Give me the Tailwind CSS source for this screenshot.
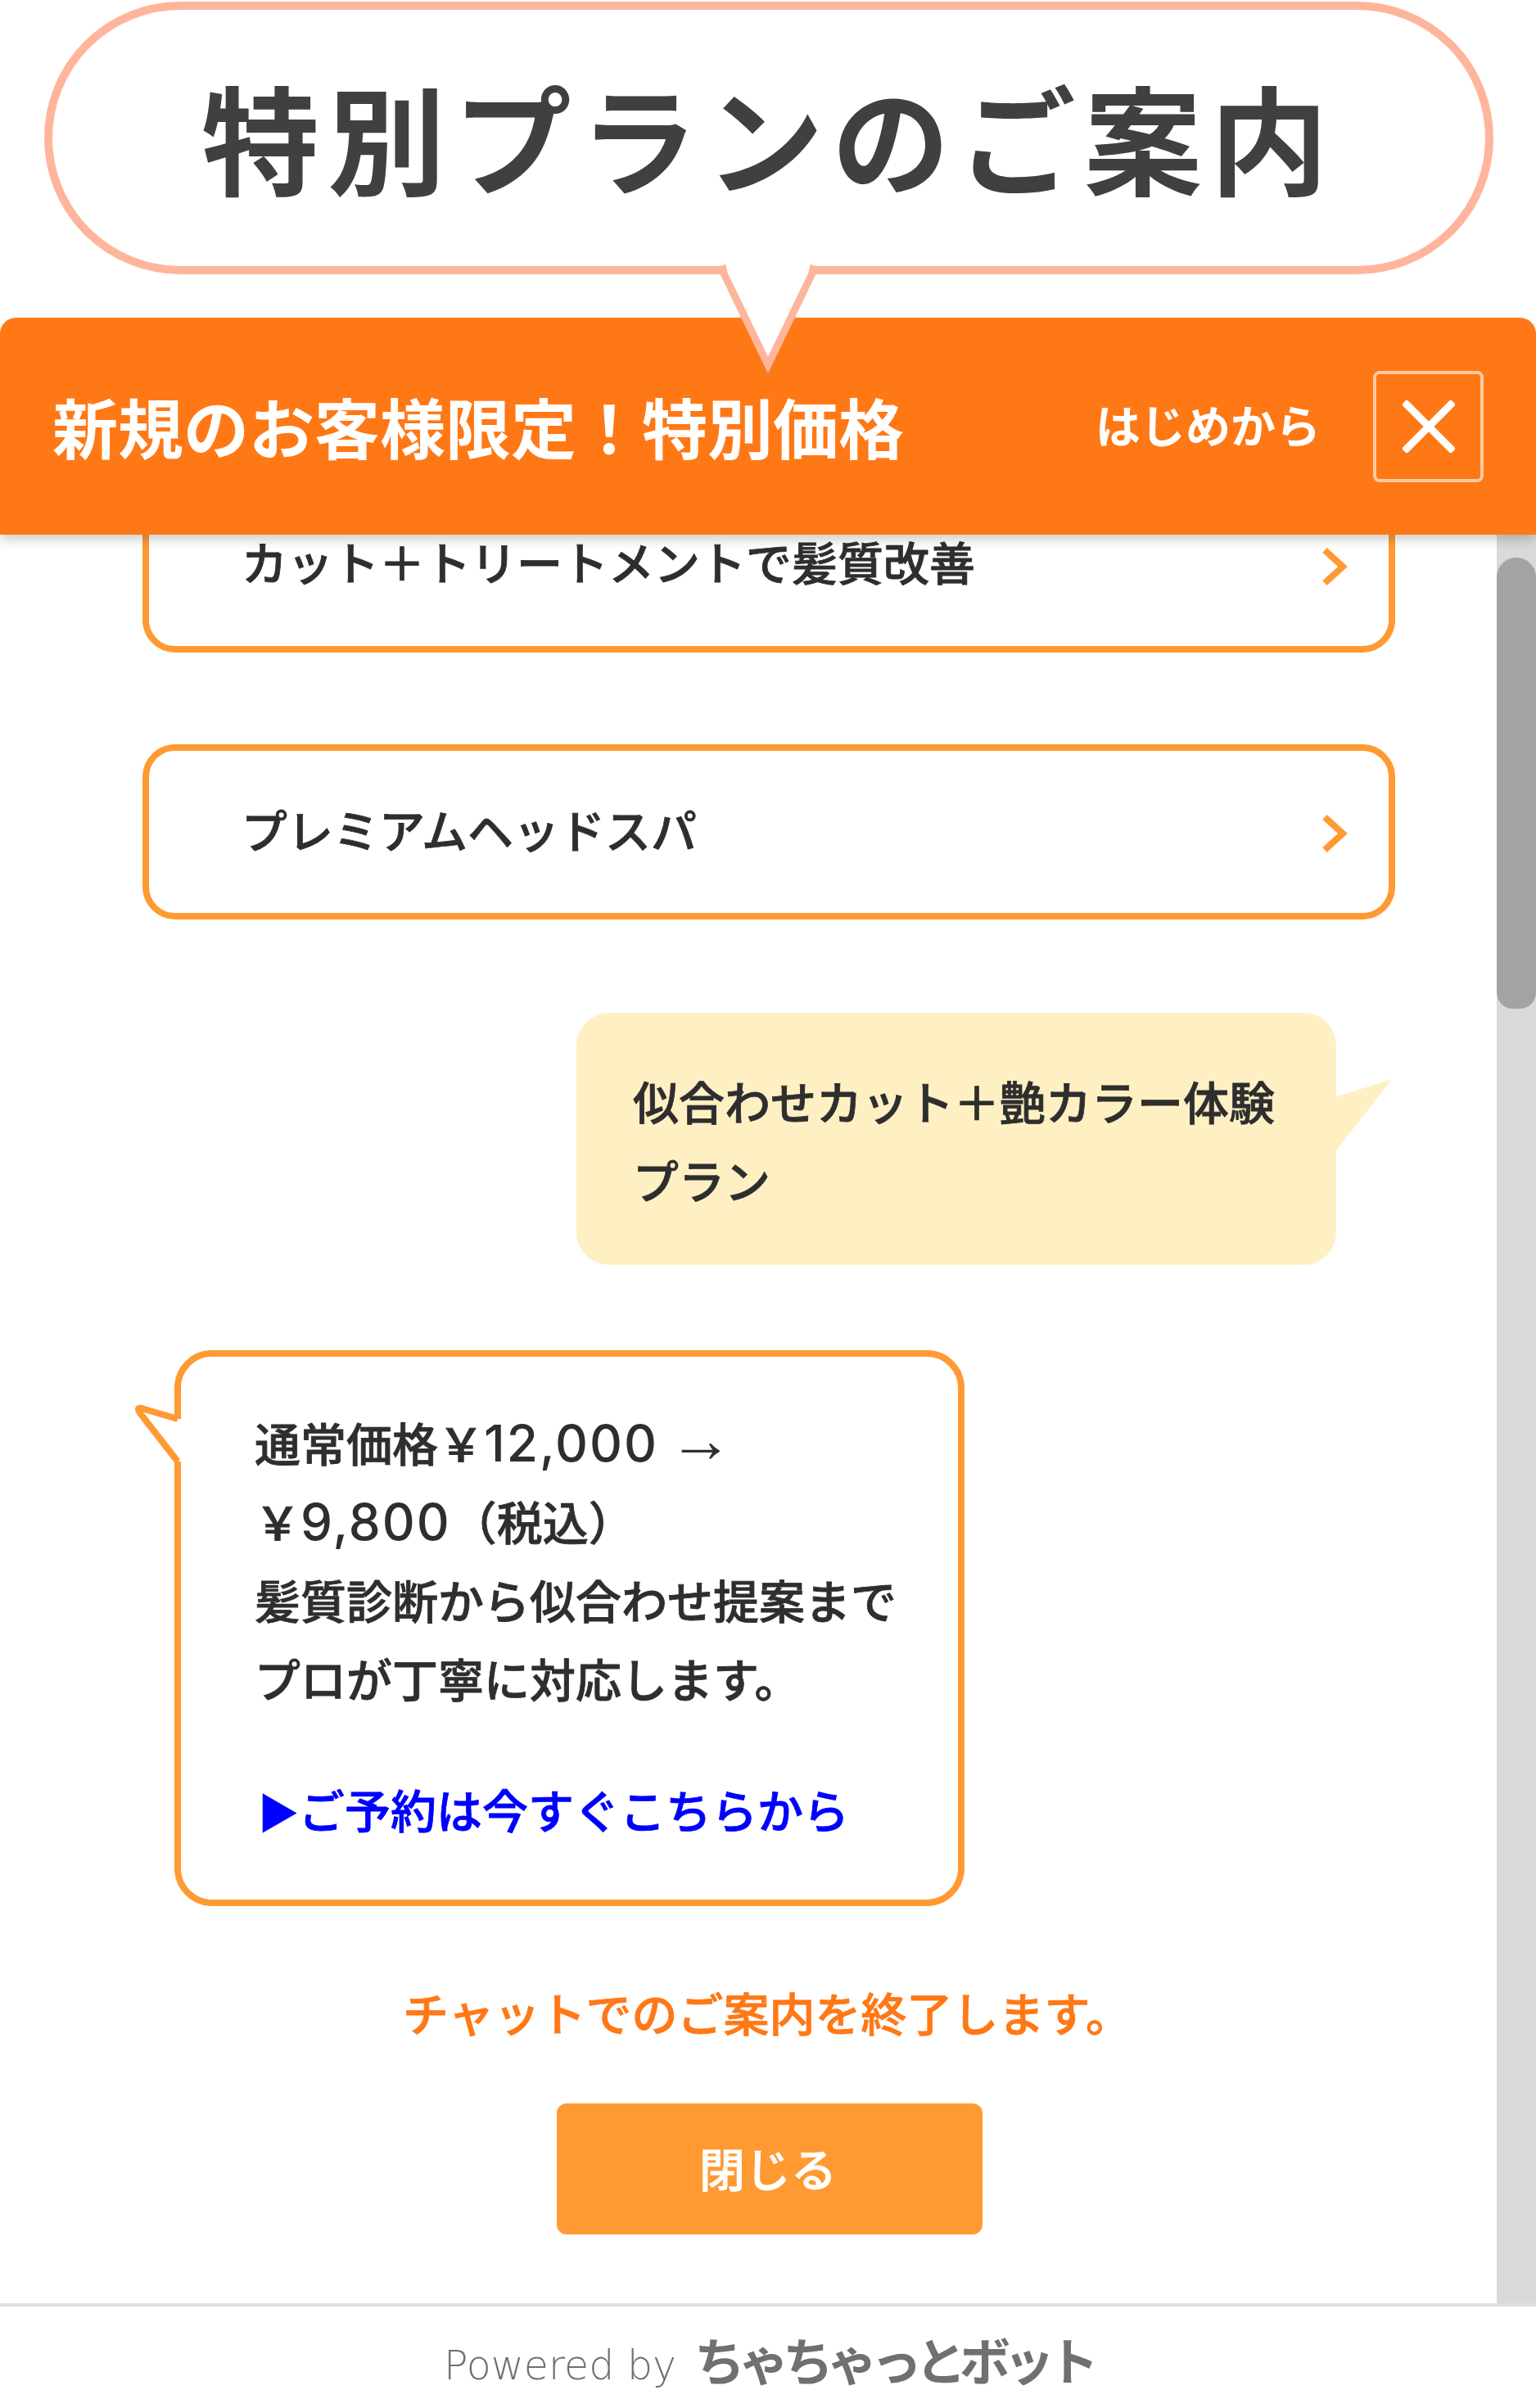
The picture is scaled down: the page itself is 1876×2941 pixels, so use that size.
<!DOCTYPE html>
<html lang="ja">
<head>
    <meta charset="UTF-8">
    <title>特別プランのご案内</title>
    <script src="https://cdn.jsdelivr.net/npm/@tailwindcss/browser@4"></script>
</head>
<body class="bg-white font-['Noto_Sans_CJK_JP','Noto_Sans',sans-serif] text-[#2e2e2e]">
<div class="w-[1876px] h-[2941px] flex flex-col overflow-hidden">

    <!-- title callout -->
    <div class="relative z-30 h-[388px] shrink-0 pt-[2px] pl-[54px]">
        <div class="w-[1770px] h-[333px] rounded-full border-[10px] border-[#ffb59b] bg-white flex items-center justify-center">
            <h1 class="text-[144px] leading-none font-bold tracking-[10px] text-[#404040] whitespace-nowrap pb-[7px]">特別プランのご案内</h1>
        </div>
        <svg class="absolute left-[870px] top-[318px] overflow-visible" width="136" height="140" viewBox="0 0 136 140">
            <polygon points="12,0 124,0 68,130" fill="#fff"/>
            <path d="M12 6 Q13 10 14 16 L68 128 L122 16 Q123 10 124 6" fill="none" stroke="#ffb59b" stroke-width="9"/>
        </svg>
    </div>

    <!-- orange header -->
    <header class="relative z-20 h-[265px] shrink-0 bg-[#ff7816] rounded-t-[20px] shadow-[0_6px_14px_rgba(0,0,0,0.2)] flex items-center pl-[64px] pr-[64px] text-white">
        <p class="text-[80px] leading-none font-bold whitespace-nowrap pb-[4px]">新規のお客様限定！特別価格</p>
        <button class="ml-auto text-[55px] leading-none font-bold whitespace-nowrap pb-[6px]">はじめから</button>
        <button class="ml-[64px] w-[135px] h-[136px] rounded-[8px] border-[4px] border-white/60 flex items-center justify-center">
            <svg width="64" height="64" viewBox="0 0 64 64"><path d="M2 2 L62 62 M62 2 L2 62" stroke="#fff" stroke-width="9" fill="none"/></svg>
        </button>
    </header>

    <!-- scrolling chat -->
    <div class="flex-1 flex min-h-0 overflow-hidden">
        <main class="flex-1 min-w-0 overflow-hidden">
            <div class="-mt-[70px]">
                <a class="ml-[174px] w-[1530px] h-[214px] rounded-[40px] border-[8px] border-[#ff9a33] flex items-center justify-between pl-[113px] pr-[50px]">
                    <span class="text-[56px] leading-none font-medium [-webkit-text-stroke:0.8px] whitespace-nowrap pb-[10px]">カット＋トリートメントで髪質改善</span>
                    <svg class="mt-[3px]" width="32" height="46" viewBox="0 0 32 46"><path d="M4 3 L26 23 L4 43" stroke="#ff9a33" stroke-width="8" fill="none"/></svg>
                </a>
                <a class="mt-[112px] ml-[174px] w-[1530px] h-[214px] rounded-[40px] border-[8px] border-[#ff9a33] flex items-center justify-between pl-[113px] pr-[50px]">
                    <span class="text-[56px] leading-none font-medium [-webkit-text-stroke:0.8px] whitespace-nowrap pb-[8px]">プレミアムヘッドスパ</span>
                    <svg class="mt-[4px]" width="32" height="46" viewBox="0 0 32 46"><path d="M4 3 L26 23 L4 43" stroke="#ff9a33" stroke-width="8" fill="none"/></svg>
                </a>

                <!-- user reply -->
                <div class="relative mt-[114px] ml-[704px] w-[928px] h-[308px] rounded-[40px] bg-[#fff0c4] pl-[69px] pt-[59px] text-[56px] leading-[96px] font-medium [-webkit-text-stroke:0.8px] whitespace-nowrap">
                    似合わせカット＋艶カラー体験<br>プラン
                    <svg class="absolute left-[926px] top-[81px]" width="70" height="90" viewBox="0 0 70 90"><polygon points="0,22 70,0 0,90" fill="#fff0c4"/></svg>
                </div>

                <!-- bot reply -->
                <div class="relative mt-[104px] ml-[213px] w-[965px] h-[679px] rounded-[46px] border-[8px] border-[#ff9a33] pl-[90px] pt-[56px] text-[56px] leading-[96px] font-medium [-webkit-text-stroke:0.8px] whitespace-nowrap">
                    <p>通常価格￥<span class="font-['Inter'] text-[62px] leading-none tracking-[2px] [-webkit-text-stroke:0px]">12,000</span> <span class="font-['Liberation_Serif'] font-normal text-[78px] leading-none [-webkit-text-stroke:0px]">→</span><br>￥<span class="font-['Inter'] text-[62px] leading-none tracking-[2px] [-webkit-text-stroke:0px]">9,800</span>（税込）<br>髪質診断から似合わせ提案まで<br>プロが丁寧に対応します。</p>
                    <a class="block mt-[64px] text-[#0000ff]"><span class="inline-block text-[50px] leading-none pl-[4px]">▶</span>ご予約は今すぐこちらから</a>
                    <svg class="absolute left-0 top-0 overflow-visible" width="10" height="10" viewBox="0 0 10 10">
                        <polygon points="-4,76 -48,62 -4,128" fill="#fff"/>
                        <rect x="-9" y="76" width="11" height="52" fill="#fff"/>
                        <path d="M-4 76 L-45 64 Q-56 60 -50 69 L-4 128" fill="none" stroke="#ff9a33" stroke-width="8"/>
                    </svg>
                </div>

                <p class="mt-[97px] pl-[46px] text-center text-[#ff7816] text-[56px] leading-[64px] font-medium [-webkit-text-stroke:0.8px] whitespace-nowrap">チャットでのご案内を終了します。</p>
                <button class="block mt-[80px] ml-[680px] w-[520px] h-[160px] rounded-[12px] bg-[#ff9a33] text-white text-[56px] font-medium [-webkit-text-stroke:0.8px] pr-[4px] pb-[4px]">閉じる</button>
            </div>
        </main>
        <!-- scrollbar -->
        <div class="w-[48px] shrink-0 bg-[#d9d9d9] pt-[28px]">
            <div class="h-[551px] rounded-t-[24px] rounded-b-[20px] bg-[#a3a3a3]"></div>
        </div>
    </div>

    <!-- footer -->
    <footer class="h-[128px] shrink-0 border-t-[4px] border-[#e0e0e0] flex items-center justify-center text-[#707070] pt-[4px]">
        <span class="font-['DejaVu_Sans'] font-light text-[49px] leading-none whitespace-nowrap pt-[16px]">Powered by</span>
        <span class="ml-[22px] text-[62px] leading-none font-bold tracking-[-8px] whitespace-nowrap">ちゃちゃっとボット</span>
    </footer>
</div>
</body>
</html>
